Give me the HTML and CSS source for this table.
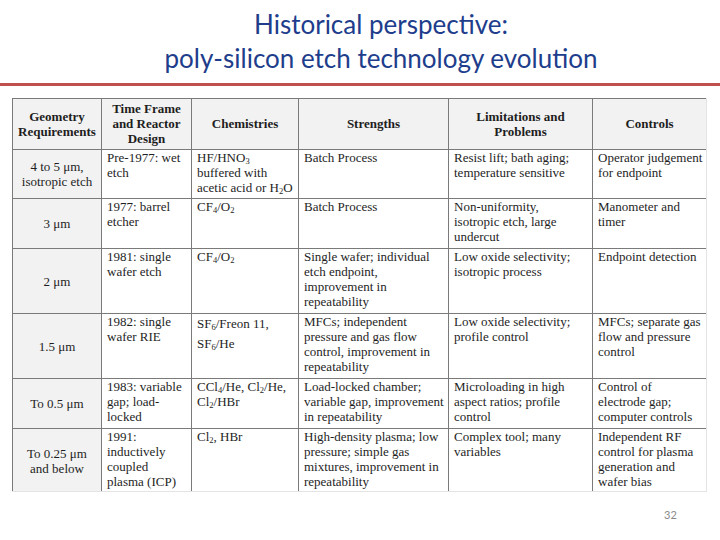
FILE: index.html
```html
<!DOCTYPE html>
<html>
<head>
<meta charset="utf-8">
<link rel="stylesheet" href="styles.css">
</head>
<body>
<div class="slide">
  <header class="title">
    <h1>Historical perspective:<br>poly-silicon etch technology evolution</h1>
  </header>
  <div class="rule"></div>
  <div class="table-frame">
    <table class="etch">
      <colgroup>
        <col class="c1"><col class="c2"><col class="c3"><col class="c4"><col class="c5"><col class="c6">
      </colgroup>
      <thead>
        <tr class="r-head">
          <th>Geometry<br>Requirements</th>
          <th>Time Frame<br>and Reactor<br>Design</th>
          <th>Chemistries</th>
          <th>Strengths</th>
          <th>Limitations and<br>Problems</th>
          <th>Controls</th>
        </tr>
      </thead>
      <tbody>
        <tr class="r-49">
          <td class="geo">4 to 5 μm,<br>isotropic etch</td>
          <td>Pre-1977: wet<br>etch</td>
          <td>HF/HNO<sub>3</sub><br>buffered with<br>acetic acid or H<sub>2</sub>O</td>
          <td>Batch Process</td>
          <td>Resist lift; bath aging;<br>temperature sensitive</td>
          <td>Operator judgement<br>for endpoint</td>
        </tr>
        <tr class="r-50">
          <td class="geo">3 μm</td>
          <td>1977: barrel<br>etcher</td>
          <td>CF<sub>4</sub>/O<sub>2</sub></td>
          <td>Batch Process</td>
          <td>Non-uniformity,<br>isotropic etch, large<br>undercut</td>
          <td>Manometer and<br>timer</td>
        </tr>
        <tr class="r-65">
          <td class="geo">2 μm</td>
          <td>1981: single<br>wafer etch</td>
          <td>CF<sub>4</sub>/O<sub>2</sub></td>
          <td>Single wafer; individual<br>etch endpoint,<br>improvement in<br>repeatability</td>
          <td>Low oxide selectivity;<br>isotropic process</td>
          <td>Endpoint detection</td>
        </tr>
        <tr class="r-65">
          <td class="geo">1.5 μm</td>
          <td>1982: single<br>wafer RIE</td>
          <td class="loose">SF<sub>6</sub>/Freon 11,<br>SF<sub>6</sub>/He</td>
          <td>MFCs; independent<br>pressure and gas flow<br>control, improvement in<br>repeatability</td>
          <td>Low oxide selectivity;<br>profile control</td>
          <td>MFCs; separate gas<br>flow and pressure<br>control</td>
        </tr>
        <tr class="r-50">
          <td class="geo">To 0.5 μm</td>
          <td>1983: variable<br>gap; load-<br>locked</td>
          <td>CCl<sub>4</sub>/He, Cl<sub>2</sub>/He,<br>Cl<sub>2</sub>/HBr</td>
          <td>Load-locked chamber;<br>variable gap, improvement<br>in repeatability</td>
          <td>Microloading in high<br>aspect ratios; profile<br>control</td>
          <td>Control of<br>electrode gap;<br>computer controls</td>
        </tr>
        <tr class="r-65">
          <td class="geo">To 0.25 μm<br>and below</td>
          <td>1991:<br>inductively<br>coupled<br>plasma (ICP)</td>
          <td>Cl<sub>2</sub>, HBr</td>
          <td>High-density plasma; low<br>pressure; simple gas<br>mixtures, improvement in<br>repeatability</td>
          <td>Complex tool; many<br>variables</td>
          <td>Independent RF<br>control for plasma<br>generation and<br>wafer bias</td>
        </tr>
      </tbody>
    </table>
  </div>
  <footer class="page-num">32</footer>
</div>
</body>
</html>
```
FILE: styles.css
```css
html, body {
  margin: 0;
  padding: 0;
  background: #ffffff;
}

.slide {
  width: 720px;
  height: 540px;
  overflow: hidden;
}

.title {
  padding: 7px 0 0 42px;
  text-align: center;
}

.title h1 {
  margin: 0;
  font-family: Lato, "Open Sans", sans-serif;
  font-weight: normal;
  font-size: 26px;
  line-height: 34px;
  color: #203d8c;
}

.rule {
  margin-top: 8px;
  height: 3px;
  background: #c0504d;
}

.table-frame {
  margin: 12px 0 0 12px;
  width: 695px;
  height: 394px;
  overflow: hidden;
  border-bottom: 1px solid #e4e4e4;
  border-right: 1px solid #e4e4e4;
  box-sizing: border-box;
}

.etch {
  border-collapse: collapse;
  table-layout: fixed;
  width: 695px;
  font-family: "Liberation Serif", "Times New Roman", serif;
  font-size: 13px;
  line-height: 15px;
  color: #1e1e1e;
}

.c1 { width: 89px; }
.c2 { width: 90px; }
.c3 { width: 107px; }
.c4 { width: 150px; }
.c5 { width: 144px; }
.c6 { width: 114px; }

.etch th,
.etch td {
  border: 1px solid #7a7a7a;
  padding: 0 3px 0 5px;
  vertical-align: top;
  text-align: left;
  overflow: hidden;
  white-space: nowrap;
}

.etch th {
  background: #f2f2f2;
  font-weight: bold;
  text-align: center;
  vertical-align: middle;
  font-size: 13px;
  padding: 0 1px 1px;
}

.r-head { height: 51px; }
.r-49 { height: 49px; }
.r-50 { height: 50px; }
.r-65 { height: 65px; }

.etch td.geo {
  background: #f2f2f2;
  text-align: center;
  vertical-align: middle;
  padding: 0 1px;
}

.etch sub {
  font-size: 8.5px;
  line-height: 8px;
  vertical-align: -2px;
}

.etch td.loose {
  line-height: 20px;
  padding-top: 0;
}

.page-num {
  margin: 16px 0 0 664px;
  font-family: Lato, "Open Sans", sans-serif;
  font-size: 11px;
  color: #8a8a8a;
}
```
